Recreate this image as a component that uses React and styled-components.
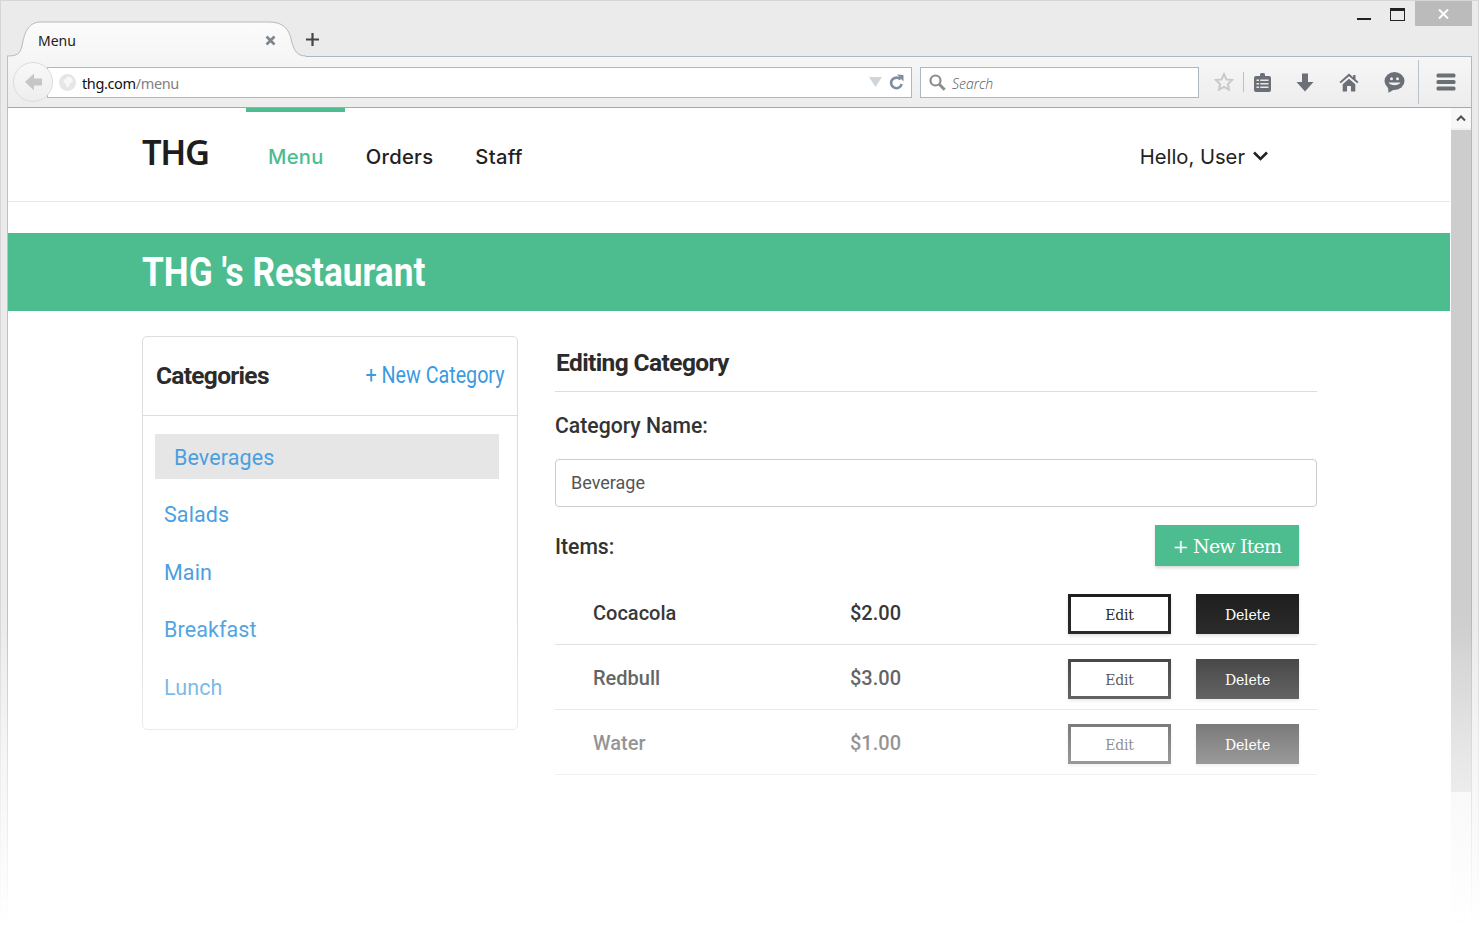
import React from "react";
import styled, { createGlobalStyle } from "styled-components";

const Global = createGlobalStyle`
  html, body { margin: 0; padding: 0; background: #fff; overflow: hidden; }
  * { box-sizing: border-box; }
  body { font-family: Roboto, "Liberation Sans", sans-serif; }
`;

const Window = styled.div`
  position: relative; width: 1479px; height: 932px; overflow: hidden;
  background: #ebebeb; box-shadow: inset 1px 1px 0 #d6d6d6, inset -1px 0 0 #d6d6d6;
  padding: 1px 7px 0; display: flex; flex-direction: column;
`;
const FadeOut = styled.div`
  position: absolute; left: 0; right: 0; top: 594px; bottom: 0; pointer-events: none; z-index: 5;
  background: linear-gradient(to bottom,
    rgba(255,255,255,0) 0,
    rgba(255,255,255,.06) 40px,
    rgba(255,255,255,.19) 65px,
    rgba(255,255,255,.31) 105px,
    rgba(255,255,255,.41) 130px,
    rgba(255,255,255,.55) 170px,
    rgba(255,255,255,.62) 198px,
    rgba(255,255,255,1) 331px);
`;

const TitleBar = styled.div`height: 55px; display: flex; align-items: flex-start; flex: none;`;
const Tab = styled.div`
  position: relative; z-index: 2; width: 299px; height: 36px; margin-top: 20px; flex: none;
  display: flex; align-items: center; padding: 3px 15px 0 31px;
  font: 400 14px "Noto Sans", sans-serif; color: #222;
`;
const TabShape = styled.svg`position: absolute; left: 0; top: 0; z-index: -1;`;
const TabLabel = styled.span`flex: 1;`;
const TabClose = styled.svg`margin-right: 15px; margin-top: -1px;`;
const NewTab = styled.svg`margin: 32px 0 0 0; flex: none;`;
const WindowControls = styled.div`margin-left: auto; display: flex; align-items: flex-start;`;
const Minimize = styled.div`width: 14px; height: 2px; background: #222; margin-top: 17px;`;
const Maximize = styled.div`
  width: 15px; height: 13px; margin: 7px 10px 0 19px;
  border: 1px solid #222; border-top-width: 3px;
`;
const CloseWin = styled.div`
  width: 57px; height: 25px; background: #bbb;
  display: flex; align-items: center; justify-content: center;
`;

const Frame = styled.div`
  flex: 1; display: flex; flex-direction: column; min-height: 0;
  border-left: 1px solid #bdc0c4; border-right: 1px solid #b4b8bd;
`;
const Toolbar = styled.div`
  height: 52px; margin: 0 -1px; flex: none; display: flex; align-items: center;
  padding: 0 0 0 5px; border: 1px solid #aeb7c2; border-bottom-color: #a8a8a8; border-left-color: #bdc0c4;
  background: linear-gradient(#f6f6f6, #ededed);
`;
const BackButton = styled.div`
  position: relative; z-index: 1; width: 40px; height: 40px; border-radius: 50%; flex: none;
  background: linear-gradient(#f8f8f8, #eee); border: 1px solid #dcdcdc;
  display: flex; align-items: center; justify-content: center; margin-right: -6px;
`;
const Field = styled.div`
  height: 31px; width: ${p => p.$w}px; flex: none; background: #fff; border: 1px solid #aeb8c4;
  display: flex; align-items: center; margin-right: ${p => p.$mr || 0}px;
`;
const UrlText = styled.span`
  font: 400 14.5px "Noto Sans", sans-serif; color: #111; margin-left: 6px; padding-top: 2px; flex: 1; letter-spacing: -.37px;
`;
const UrlPath = styled.span`color: #808080;`;
const SearchText = styled.span`
  font: italic 300 14px "Open Sans", sans-serif; color: #555; margin-left: 6px; padding-top: 2px;
`;
const Slot = styled.div`
  width: ${p => p.$w}px; margin-left: ${p => p.$ml || 0}px; flex: none;
  display: flex; align-items: center; justify-content: center;
`;
const Sep = styled.div`
  width: 1px; height: ${p => p.$h}px; background: #b9c2cc; flex: none; margin-left: ${p => p.$ml || 0}px;
`;

const Viewport = styled.div`flex: 1; display: flex; min-height: 0; background: #fff;`;
const Page = styled.div`width: 1442px; flex: none; background: #fff;`;
const Scrollbar = styled.div`
  width: 20px; margin-left: 1px; flex: none; background: #f0f0f0; display: flex; flex-direction: column;
`;
const ScrollArrow = styled.div`
  height: 20px; flex: none; display: flex; align-items: center; justify-content: center; background: #f7f7f7;
`;
const ScrollThumb = styled.div`height: 662px; margin-top: 2px; background: #cdcdcd; flex: none;`;
const ScrollSpace = styled.div`flex: 1;`;

const NavBar = styled.nav`
  height: 94px; border-bottom: 1px solid #e6e6e6; padding: 0 182px 0 134px;
  display: flex; align-items: flex-start;
`;
const Logo = styled.div`
  width: 104px; font: 600 34.5px/87px "Noto Sans", sans-serif; color: #1d1d1d; letter-spacing: -1.4px;
`;
const NavItem = styled.a`
  border-top: 4px solid ${p => (p.$active ? "#4dbd8f" : "transparent")};
  padding: 0 21px 0 ${p => (p.$active ? 22 : 21)}px; display: flex; align-items: center; height: 92px;
  font: 500 20.2px Inter, sans-serif; letter-spacing: .28px;
  color: ${p => (p.$active ? "#4dbd8f" : "#222")};
`;
const UserMenu = styled.div`
  margin-left: auto; height: 94px; display: flex; align-items: center; gap: 8px; padding-top: 2px;
  font: 400 20.2px Inter, sans-serif; color: #222;
`;
const Banner = styled.div`
  margin-top: 31px; height: 78px; background: #4dbd8f; padding-left: 134px;
  display: flex; align-items: center;
`;
const BannerTitle = styled.h1`
  margin: 0; color: #fff; font: 700 40px Roboto, sans-serif; white-space: nowrap;
  transform: scaleX(.88); transform-origin: left center;
`;
const Main = styled.div`
  padding: 25px 0 0 134px; display: flex; gap: 37px; align-items: flex-start;
`;

const Panel = styled.aside`width: 376px; flex: none; border: 1px solid #ddd; border-radius: 5px;`;
const PanelHead = styled.div`
  height: 79px; border-bottom: 1px solid #ddd; display: flex; align-items: center;
  justify-content: space-between; padding: 0 12px 2px 13px;
`;
const PanelTitle = styled.h2`
  margin: 0; font: 700 24.5px Roboto, sans-serif; letter-spacing: -.7px; color: #2b2b2b;
`;
const NewCategory = styled.a`
  font: 400 24px Roboto, sans-serif; color: #3a9be2; white-space: nowrap;
  display: inline-block; transform: scaleX(.82); transform-origin: right center;
`;
const CatList = styled.ul`list-style: none; margin: 0; padding: 18px 18px 20px 12px;`;
const CatItem = styled.li`
  height: 45px; margin-bottom: ${p => (p.$last ? 0 : 12.5)}px; display: flex; align-items: center;
  padding: 1px 0 0 ${p => (p.$active ? 19 : 9)}px; background: ${p => (p.$active ? "#e6e6e6" : "transparent")};
  font: 400 21.5px Roboto, sans-serif; color: #4a9fe0; letter-spacing: .1px;
`;

const Editor = styled.section`width: 762px; flex: none;`;
const EditorTitle = styled.h2`
  margin: 0; height: 56px; border-bottom: 1px solid #ddd; padding: 11px 0 0 1px;
  font: 700 24.5px/32px Roboto, sans-serif; letter-spacing: -.6px; color: #2b2b2b;
`;
const FieldLabel = styled.div`
  font: 500 21.2px/26px Roboto, sans-serif; color: #333;
  padding: ${p => p.$pt || 0}px 0 ${p => p.$pb || 0}px;
`;
const NameInput = styled.input`
  display: block; width: 100%; height: 48px; border: 1px solid #ccc; border-radius: 4px;
  padding: 0 15px 2px; font: 400 18px Roboto, sans-serif; color: #555; outline: 0; background: #fff;
`;
const ItemsHead = styled.div`
  margin-top: 18px; padding-right: 18px; display: flex; justify-content: space-between; align-items: center;
`;
const NewItem = styled.button`
  width: 144px; height: 41px; border: 0; background: #4dbd8f; color: #fff; padding: 0;
  font: 400 19px "DejaVu Serif", serif; letter-spacing: -.8px; box-shadow: 0 2px 3px rgba(0,0,0,.15);
`;
const ItemsTable = styled.div`margin-top: 14px;`;
const ItemRow = styled.div`
  height: 65px; padding: 14px 18px 10px 38px; border-bottom: 1px solid #ddd;
  display: grid; grid-template-columns: 257px 1fr 103px 128px; align-items: center;
`;
const ItemCell = styled.div`font: 500 20px Roboto, sans-serif; color: #333; margin-top: -2px;`;
const ActionBtn = styled.button`
  width: 103px; height: 40px; padding: 1px 0 0; font: 400 14px "DejaVu Serif", serif; letter-spacing: -.2px;
  box-shadow: 0 2px 3px rgba(0,0,0,.12);
  background: ${p => (p.$solid ? "#1e1e1e" : "#fff")};
  color: ${p => (p.$solid ? "#fff" : "#1e1e1e")};
  border: ${p => (p.$solid ? "0" : "3px solid #1e1e1e")};
  margin-left: ${p => (p.$solid ? 25 : 0)}px;
`;

const items = [
  ["Cocacola", "$2.00"],
  ["Redbull", "$3.00"],
  ["Water", "$1.00"],
];
const cats = ["Beverages", "Salads", "Main", "Breakfast", "Lunch"];
const ICON = "#6b7077";

export default function App() {
  return (
    <>
      <Global />
      <Window>
        <TitleBar>
          <Tab>
            <TabShape width="299" height="36" viewBox="0 0 299 36">
              <defs>
                <linearGradient id="tabg" x1="0" y1="0" x2="0" y2="1">
                  <stop offset="0" stopColor="#fbfbfb" />
                  <stop offset="1" stopColor="#f6f6f6" />
                </linearGradient>
              </defs>
              <path d="M1 36V35C10 35 13 33 15 25C17 14 20 1 34 1L262 1C276 1 282 8 284 18C287 30 290 35 299 35V36Z" fill="url(#tabg)" />
              <path d="M0 35C10 35 13 33 15 25C17 14 20 1 34 1L262 1C276 1 282 8 284 18C287 30 290 35 299 35" fill="none" stroke="#b3bac3" />
            </TabShape>
            <TabLabel>Menu</TabLabel>
            <TabClose width="11" height="11" viewBox="0 0 11 11">
              <path d="M1.5 1.5l8 8M9.5 1.5l-8 8" stroke="#7f858c" strokeWidth="2.6" />
            </TabClose>
          </Tab>
          <NewTab width="13" height="13" viewBox="0 0 13 13">
            <path d="M6.5 0v13M0 6.5h13" stroke="#444" strokeWidth="2.2" />
          </NewTab>
          <WindowControls>
            <Minimize />
            <Maximize />
            <CloseWin>
              <svg width="11" height="10" viewBox="0 0 11 10">
                <path d="M1 .5l9 9M10 .5l-9 9" stroke="#fff" strokeWidth="2" />
              </svg>
            </CloseWin>
          </WindowControls>
        </TitleBar>
        <Frame>
          <Toolbar>
            <BackButton>
              <svg width="19" height="18" viewBox="0 0 19 18">
                <path d="M10 0.5L1 9l9 8.5V12.5h8v-7h-8z" fill="#c6c6c6" />
              </svg>
            </BackButton>
            <Field $w={865} $mr={8}>
              <svg width="17" height="17" viewBox="0 0 17 17" style={{ marginLeft: 11 }}>
                <circle cx="8.5" cy="8.5" r="8.5" fill="#e6e6e6" />
                <path d="M9 2.5l4 1.5 1 4-3 1-1 3-2 2-1-4-3-2 2-3z" fill="#f7f7f7" />
              </svg>
              <UrlText>thg.com<UrlPath>/menu</UrlPath></UrlText>
              <svg width="13" height="10" viewBox="0 0 13 10">
                <path d="M0 0h13L6.5 10z" fill="#d0d5da" />
              </svg>
              <svg width="15" height="16" viewBox="0 0 15 16" style={{ margin: "0 7px 0 7px" }}>
                <path d="M11.5 5.5A5.3 5.3 0 1 0 12.6 10" fill="none" stroke="#7e8da0" strokeWidth="2.6" />
                <path d="M8 0.5L14.5 1V7.5z" fill="#7e8da0" />
              </svg>
            </Field>
            <Field $w={279}>
              <svg width="17" height="17" viewBox="0 0 17 17" style={{ marginLeft: 8 }}>
                <circle cx="6.5" cy="6.5" r="5" fill="none" stroke="#8d8d8d" strokeWidth="2.2" />
                <path d="M10.5 10.5l5.2 5.2" stroke="#8d8d8d" strokeWidth="3" />
              </svg>
              <SearchText>Search</SearchText>
            </Field>
            <Slot $w={36} $ml={7}>
              <svg width="20" height="20" viewBox="0 0 20 20">
                <path d="M10 2.2l2.4 5.2 5.6.7-4.1 3.9 1.1 5.6L10 14.800l-5 2.800 1.100-5.600L2 8.100l5.600-.7z" fill="none" stroke="#c9c9c9" strokeWidth="2" />
              </svg>
            </Slot>
            <Sep $h={20} $ml={1} />
            <Slot $w={36}>
              <svg width="17" height="19" viewBox="0 0 17 19">
                <path d="M2 3h4V1.500A1.500 1.500 0 0 1 7.500 0h2A1.500 1.500 0 0 1 11 1.500V3h4a2 2 0 0 1 2 2v12a2 2 0 0 1-2 2H2a2 2 0 0 1-2-2V5a2 2 0 0 1 2-2z" fill={ICON} />
                <path d="M2.500 6.500h12v1.500h-12zM2.500 10h12v1.500h-12zM2.500 13.500h12V15h-12z" fill="#e8e8e8" />
                <path d="M5 5.500h1.200v10H5z" fill={ICON} />
              </svg>
            </Slot>
            <Slot $w={44} $ml={3}>
              <svg width="18" height="19" viewBox="0 0 18 19">
                <path d="M6 0.500h6V9h5.500L9 18.500.5 9H6z" fill={ICON} />
              </svg>
            </Slot>
            <Slot $w={44}>
              <svg width="20" height="19" viewBox="0 0 20 19">
                <path d="M10 0.500L0.500 9 1.800 10.300 10 3.200l8.200 7.100L19.500 9l-3-2.700V2h-2.300v2.300z" fill={ICON} />
                <path d="M3.700 11.300L10 5.800l6.300 5.500V18.500h-4.300v-5.500h-4v5.500H3.700z" fill={ICON} />
              </svg>
            </Slot>
            <Slot $w={44} $ml={1}>
              <svg width="21" height="21" viewBox="0 0 21 21">
                <ellipse cx="10.500" cy="9" rx="10" ry="9" fill={ICON} />
                <path d="M4 15L4.500 20.800 11 17z" fill={ICON} />
                <circle cx="7.500" cy="6.800" r="1.500" fill="#efefef" />
                <circle cx="13.500" cy="6.800" r="1.500" fill="#efefef" />
                <path d="M4.500 10.500c2 3.500 10 3.500 12 0z" fill="#efefef" />
              </svg>
            </Slot>
            <Sep $h={44} $ml={2} />
            <Slot $w={53}>
              <svg width="20" height="18" viewBox="0 0 20 18">
                <rect x="0.500" y="0.500" width="19" height="4" rx="1.500" fill={ICON} />
                <rect x="0.500" y="7" width="19" height="4" rx="1.500" fill={ICON} />
                <rect x="0.500" y="13.500" width="19" height="4" rx="1.500" fill={ICON} />
              </svg>
            </Slot>
          </Toolbar>
          <Viewport>
            <Page>
              <NavBar>
                <Logo>THG</Logo>
                <NavItem $active>Menu</NavItem>
                <NavItem>Orders</NavItem>
                <NavItem>Staff</NavItem>
                <UserMenu>
                  Hello, User
                  <svg width="15" height="10" viewBox="0 0 15 10">
                    <path d="M1 1.500L7.500 8 14 1.500" fill="none" stroke="#222" strokeWidth="2.600" />
                  </svg>
                </UserMenu>
              </NavBar>
              <Banner>
                <BannerTitle>THG 's Restaurant</BannerTitle>
              </Banner>
              <Main>
                <Panel>
                  <PanelHead>
                    <PanelTitle>Categories</PanelTitle>
                    <NewCategory>+ New Category</NewCategory>
                  </PanelHead>
                  <CatList>
                    {cats.map((c, i) => (
                      <CatItem key={c} $active={i === 0} $last={i === cats.length - 1}>{c}</CatItem>
                    ))}
                  </CatList>
                </Panel>
                <Editor>
                  <EditorTitle>Editing Category</EditorTitle>
                  <FieldLabel $pt={21} $pb={20}>Category Name:</FieldLabel>
                  <NameInput defaultValue="Beverage" />
                  <ItemsHead>
                    <FieldLabel $pt={3}>Items:</FieldLabel>
                    <NewItem>+ New Item</NewItem>
                  </ItemsHead>
                  <ItemsTable>
                    {items.map(([name, price]) => (
                      <ItemRow key={name}>
                        <ItemCell>{name}</ItemCell>
                        <ItemCell>{price}</ItemCell>
                        <ActionBtn>Edit</ActionBtn>
                        <ActionBtn $solid>Delete</ActionBtn>
                      </ItemRow>
                    ))}
                  </ItemsTable>
                </Editor>
              </Main>
            </Page>
            <Scrollbar>
              <ScrollArrow>
                <svg width="10" height="7" viewBox="0 0 10 7">
                  <path d="M1 5.500l4-4 4 4" fill="none" stroke="#505050" strokeWidth="2" />
                </svg>
              </ScrollArrow>
              <ScrollThumb />
              <ScrollSpace />
              <ScrollArrow>
                <svg width="10" height="7" viewBox="0 0 10 7">
                  <path d="M1 1.500l4 4 4-4" fill="none" stroke="#505050" strokeWidth="2" />
                </svg>
              </ScrollArrow>
            </Scrollbar>
          </Viewport>
        </Frame>
        <FadeOut />
      </Window>
    </>
  );
}
